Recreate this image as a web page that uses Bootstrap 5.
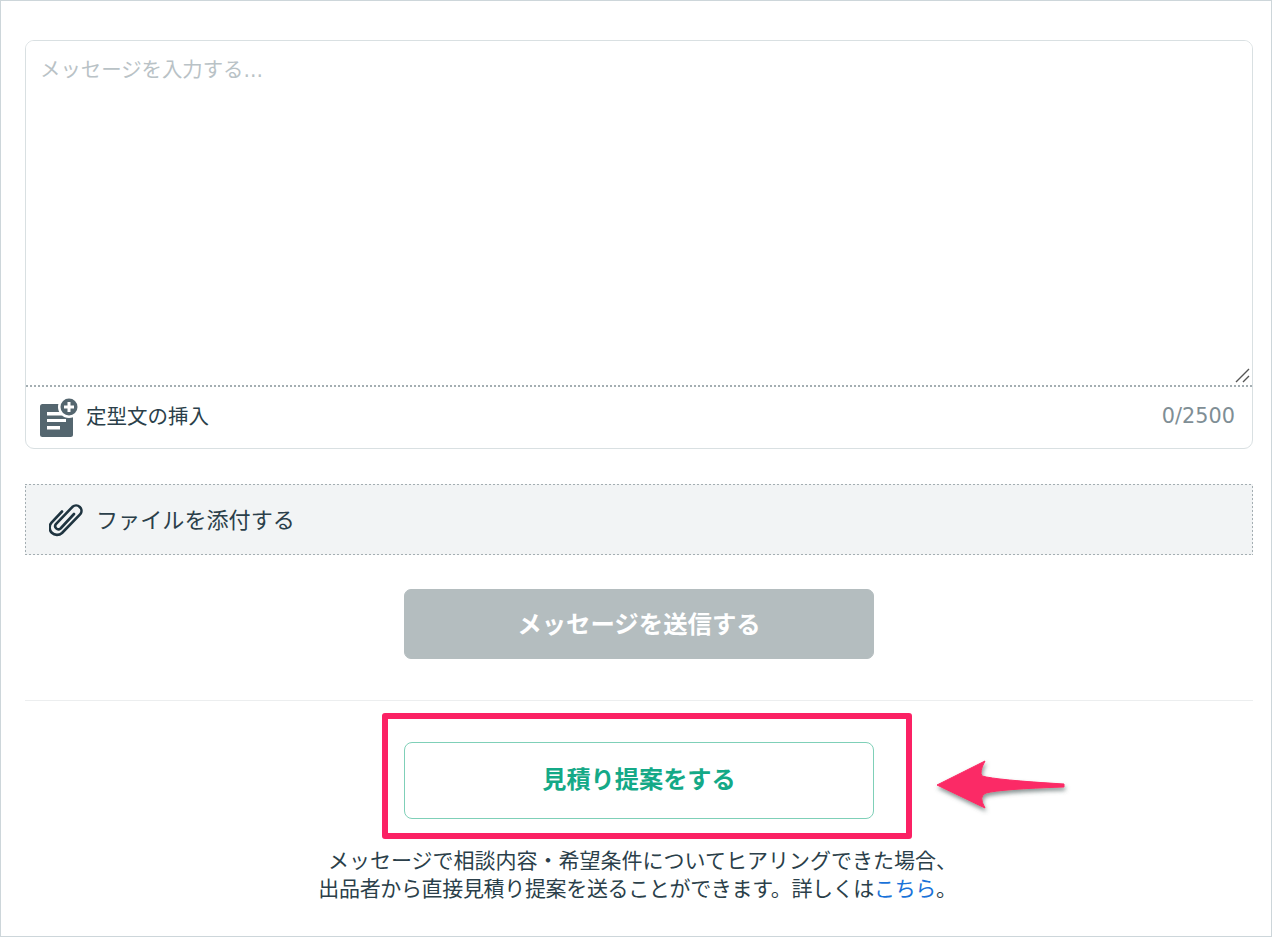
<!DOCTYPE html>
<html lang="ja">
<head>
<meta charset="utf-8">
<title>メッセージ</title>
<link rel="stylesheet" href="https://cdn.jsdelivr.net/npm/bootstrap@5.3.0/dist/css/bootstrap.min.css">
<style>
html,body{height:100%;background:#fff}
body{font-family:"DejaVu Sans","Noto Sans CJK JP",sans-serif;color:#2b3f4a;overflow:hidden}
.frame{position:relative;height:937px;border:1px solid #cdd6da;padding:39px 18px 0 24px}
.composer{position:relative;height:409px;border:1px solid #d9e0e2;border-radius:9px;overflow:hidden}
.msg-input{display:block;width:100%;height:344px;border:0;border-radius:0;padding:14px 14px;font-size:20.4px;line-height:30px;background:#fff;color:#2b3f4a;resize:none;outline:0;box-shadow:none}
.msg-input::placeholder{color:#b9c2c6;opacity:1}
.grip{position:absolute;right:1px;bottom:64px}
.composer-foot{height:63px;padding:1px 17px 0 14px;background:linear-gradient(90deg,#a4aeb2 50%,transparent 50%) top left/4px 2px repeat-x}
.tmpl-label{font-size:20.5px;margin-left:8px;color:#2b3f4a}
.counter{font-size:20.8px;color:#7f8e95}
.attach{height:71px;margin-top:35px;padding-left:24px;font-size:22.1px;color:#2b3f4a;background-color:#f2f4f5;background-image:linear-gradient(90deg,#a4aeb2 50%,transparent 50%),linear-gradient(90deg,#a4aeb2 50%,transparent 50%),linear-gradient(0deg,#a4aeb2 50%,transparent 50%),linear-gradient(0deg,#a4aeb2 50%,transparent 50%);background-size:4px 1px,4px 1px,1px 4px,1px 4px;background-position:0 0,0 100%,0 0,100% 0;background-repeat:repeat-x,repeat-x,repeat-y,repeat-y}
.attach span{margin-left:13px;position:relative;top:1px}
.send-wrap{margin-top:34px}
.btn.send{--bs-btn-disabled-bg:#b4bdbf;--bs-btn-disabled-border-color:#b4bdbf;--bs-btn-disabled-color:#fff;--bs-btn-disabled-opacity:1;width:470px;height:70px;border-radius:7px;font-weight:700;font-size:24.4px;padding-top:8px}
.rule-line{height:1px;background:#eceeef;margin-top:41px}
.mark-box{width:530px;height:126px;margin-top:12px;margin-left:357px;padding:23px 0 0 16px;border:6px solid #fb2164;border-radius:3px}
.quote{width:470px;height:77px;background:#fff;border:1px solid #7fd0b8;border-radius:8px;color:#14a987;font-weight:700;font-size:24.2px}
.note{margin-top:8px;padding-left:7px;font-size:21px;line-height:28px;color:#2b3f4a}
.note-tight{letter-spacing:-.34px;position:relative;left:-5px}
.note a{color:#1a73d9;text-decoration:none}
.pointer{position:absolute;left:935px;top:759px;width:132px;height:54px;overflow:visible}
</style>
</head>
<body>
<div class="frame bg-white">
  <div class="composer">
    <textarea class="msg-input" placeholder="メッセージを入力する..."></textarea>
    <svg class="grip" width="16" height="16" viewBox="0 0 16 16" fill="none" stroke="#555" stroke-width="1.400" aria-hidden="true"><path d="M1 14 L14 1M8 14 L14 8"/></svg>
    <div class="composer-foot d-flex align-items-center justify-content-between">
      <div class="d-flex align-items-center">
        <svg width="38" height="39" viewBox="0 0 38 39" aria-hidden="true">
          <rect x="0" y="6" width="33" height="33" rx="2.500" fill="#54666f"/>
          <circle cx="29" cy="9" r="11" fill="#fff"/>
          <circle cx="29" cy="9" r="8.500" fill="#54666f"/>
          <path fill="#fff" d="M27.500 4h3v3.500H34v3h-3.500V14h-3v-3.500H24v-3h3.500z"/>
          <path fill="#fff" d="M7 14h15v3.500H7zM7 21h19v3H7zM7 28h13v3.500H7z"/>
        </svg>
        <span class="tmpl-label">定型文の挿入</span>
      </div>
      <span class="counter">0/2500</span>
    </div>
  </div>
  <div class="attach d-flex align-items-center">
    <svg width="34" height="36" viewBox="0 0 34 36" fill="none" stroke="#1f3440" stroke-width="2.600" stroke-linecap="round" stroke-linejoin="round" aria-hidden="true">
      <path d="M25 12 L11.500 26.500 a3.200 3.200 0 0 1 -4.600 -4.400 L23.500 4.800 a5.400 5.400 0 0 1 7.800 7.400 L13 31 a7.400 7.400 0 0 1 -10.500 -10.400 L13 9.500"/>
    </svg>
    <span>ファイルを添付する</span>
  </div>
  <div class="send-wrap d-flex justify-content-center">
    <button class="btn send" type="button" disabled>メッセージを送信する</button>
  </div>
  <div class="rule-line"></div>
  <div class="mark-box">
    <button class="btn quote d-block" type="button">見積り提案をする</button>
  </div>
  <p class="note text-center mb-0">メッセージで相談内容・希望条件についてヒアリングできた場合、<br><span class="note-tight">出品者から直接見積り提案を送ることができます。詳しくは<a href="#">こちら</a>。</span></p>
  <svg class="pointer" viewBox="0 0 132 54" aria-hidden="true">
    <defs><filter id="sh" x="-10%" y="-20%" width="125%" height="150%"><feDropShadow dx="1" dy="3" stdDeviation="2" flood-color="#4d5b5b" flood-opacity=".65"/></filter></defs>
    <path filter="url(#sh)" fill="#fb2a66" stroke="#fb2a66" stroke-width="1" stroke-linejoin="round" d="M1 25 L49 1 Q43 12 46 16 Q60 20 128 24 L128 27 Q65 29 50 33 Q42 36 49 48 Z"/>
  </svg>
</div>
<script src="https://cdn.jsdelivr.net/npm/bootstrap@5.3.0/dist/js/bootstrap.bundle.min.js"></script>
</body>
</html>
